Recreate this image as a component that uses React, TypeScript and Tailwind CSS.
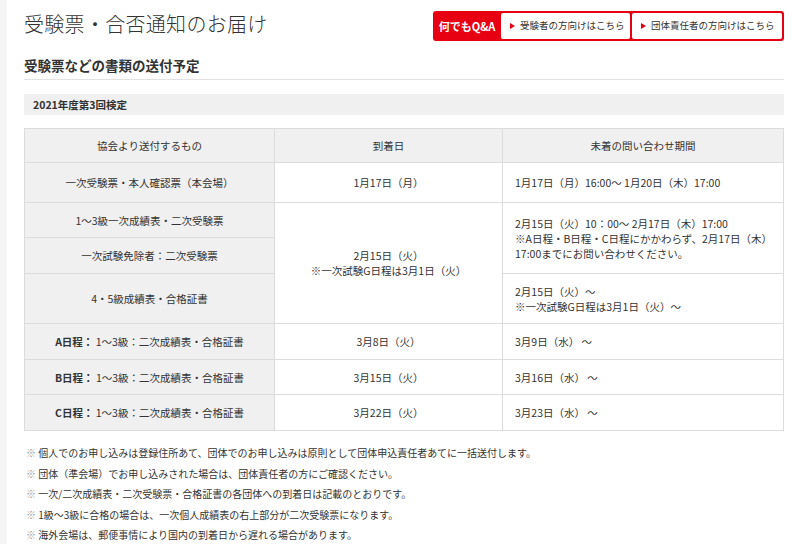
import React from "react";

const Tri = () => (
  <svg width="5" height="6" viewBox="0 0 5 6" className="shrink-0">
    <path d="M0 0 L5 3 L0 6 Z" fill="#e60012" />
  </svg>
);

const th = "border border-[#dcdcdc] bg-[#f0f0f0] font-normal text-center align-middle";
const tdL = "border border-[#dcdcdc] bg-[#f0f0f0] text-center align-middle";
const tdC = "border border-[#dcdcdc] bg-white text-center align-middle";
const tdR = "border border-[#dcdcdc] bg-white text-left align-middle pl-[12px] pr-[8px]";

export default function App() {
  return (
    <div className="flex w-[800px] h-[544px] overflow-hidden bg-white text-[#333] font-['Noto_Sans_CJK_JP',sans-serif]">
      <div className="w-[7px] shrink-0 bg-[#f4f4f4]" />
      <div className="flex-1 pl-[17px] pr-[16px]">
        {/* Header row */}
        <div className="flex items-start justify-between pt-[11px]">
          <h1 className="text-[20px] leading-[28px] font-light tracking-[0.3px] mt-[-1px] text-[#333]">
            受験票・合否通知のお届け
          </h1>
          <div className="flex items-center h-[30px] bg-[#e60012] rounded-[3px] p-[2px] gap-[2px]">
            <span className="w-[64px] text-center text-white font-bold text-[11px] leading-none whitespace-nowrap">
              何でもQ&amp;A
            </span>
            <div className="flex items-center gap-[5px] h-[26px] w-[129px] bg-white rounded-[2px] pl-[9px] text-[9.5px] leading-none whitespace-nowrap">
              <Tri />
              <span>受験者の方向けはこちら</span>
            </div>
            <div className="flex items-center gap-[5px] h-[26px] w-[150px] bg-white rounded-[2px] pl-[9px] text-[9.5px] leading-none whitespace-nowrap">
              <Tri />
              <span>団体責任者の方向けはこちら</span>
            </div>
          </div>
        </div>

        {/* Sub heading */}
        <h2 className="mt-[15px] text-[13.5px] leading-[18px] font-bold pb-[5px] border-b border-[#e2e2e2]">
          受験票などの書類の送付予定
        </h2>

        <div className="mt-[14px] h-[21px] bg-[#f0f0f0] flex items-center pl-[9px] text-[10.5px] font-bold">
          2021年度第3回検定
        </div>

        <table className="mt-[13px] w-[759px] border-collapse table-fixed text-[10.5px] leading-[15px]">
          <colgroup>
            <col className="w-[250px]" />
            <col className="w-[228px]" />
            <col className="w-[281px]" />
          </colgroup>
          <tbody>
            <tr className="h-[34px]">
              <th className={th}>協会より送付するもの</th>
              <th className={th}>到着日</th>
              <th className={th}>未着の問い合わせ期間</th>
            </tr>
            <tr className="h-[40px]">
              <td className={tdL}>一次受験票・本人確認票（本会場）</td>
              <td className={tdC}>1月17日（月）</td>
              <td className={tdR}>1月17日（月）16:00～ 1月20日（木）17:00</td>
            </tr>
            <tr className="h-[35px]">
              <td className={tdL}>1～3級一次成績表・二次受験票</td>
              <td className={tdC} rowSpan={3}>
                2月15日（火）
                <br />
                ※一次試験G日程は3月1日（火）
              </td>
              <td className={tdR} rowSpan={2}>
                2月15日（火）10：00～ 2月17日（木）17:00
                <br />
                ※A日程・B日程・C日程にかかわらず、2月17日（木）
                <br />
                17:00までにお問い合わせください。
              </td>
            </tr>
            <tr className="h-[36px]">
              <td className={tdL}>一次試験免除者：二次受験票</td>
            </tr>
            <tr className="h-[50px]">
              <td className={tdL}>4・5級成績表・合格証書</td>
              <td className={tdR}>
                2月15日（火）～
                <br />
                ※一次試験G日程は3月1日（火）～
              </td>
            </tr>
            <tr className="h-[36px]">
              <td className={tdL}>
                <b>A日程：</b> 1～3級：二次成績表・合格証書
              </td>
              <td className={tdC}>3月8日（火）</td>
              <td className={tdR}>3月9日（水） ～</td>
            </tr>
            <tr className="h-[35px]">
              <td className={tdL}>
                <b>B日程：</b> 1～3級：二次成績表・合格証書
              </td>
              <td className={tdC}>3月15日（火）</td>
              <td className={tdR}>3月16日（水） ～</td>
            </tr>
            <tr className="h-[36px]">
              <td className={tdL}>
                <b>C日程：</b> 1～3級：二次成績表・合格証書
              </td>
              <td className={tdC}>3月22日（火）</td>
              <td className={tdR}>3月23日（水） ～</td>
            </tr>
          </tbody>
        </table>

        <ul className="mt-[12px] pl-[2px] text-[10px] leading-[20.5px]">
          <li><span className="text-[#999]">※</span> 個人でのお申し込みは登録住所あて、団体でのお申し込みは原則として団体申込責任者あてに一括送付します。</li>
          <li><span className="text-[#999]">※</span> 団体（準会場）でお申し込みされた場合は、団体責任者の方にご確認ください。</li>
          <li><span className="text-[#999]">※</span> 一次/二次成績表・二次受験票・合格証書の各団体への到着日は記載のとおりです。</li>
          <li><span className="text-[#999]">※</span> 1級～3級に合格の場合は、一次個人成績表の右上部分が二次受験票になります。</li>
          <li><span className="text-[#999]">※</span> 海外会場は、郵便事情により国内の到着日から遅れる場合があります。</li>
        </ul>
      </div>
      <div className="w-[1px] shrink-0 bg-[#ececec]" />
    </div>
  );
}
